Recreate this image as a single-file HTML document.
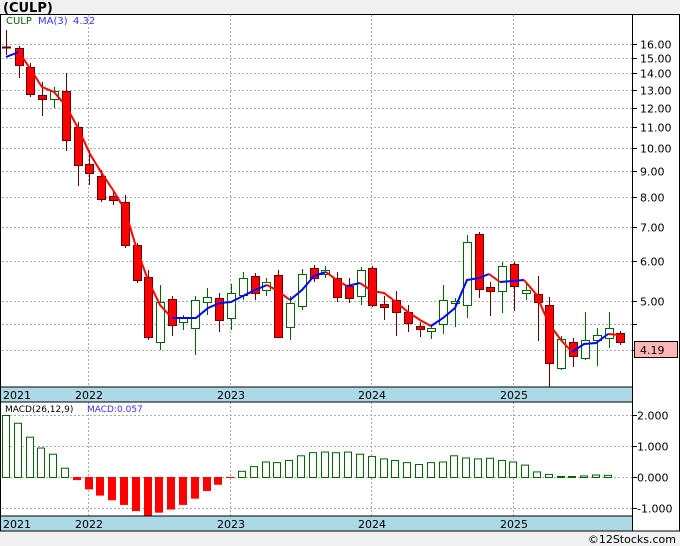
<!DOCTYPE html>
<html><head><meta charset="utf-8"><style>
html,body{margin:0;padding:0;background:#f0f0f0;width:680px;height:546px;overflow:hidden;font-family:"DejaVu Sans","Liberation Sans",sans-serif}
svg{position:absolute;left:0;top:0}
</style></head><body>
<svg id="s" width="680" height="546" xmlns="http://www.w3.org/2000/svg" font-family="DejaVu Sans, Liberation Sans, sans-serif">
<rect x="0" y="0" width="680" height="546" fill="#f0f0f0"/>
<text x="3" y="12" font-size="13" font-weight="bold" fill="#000">(CULP)</text>
<rect x="0" y="14" width="680" height="517" fill="#fff"/>
<rect x="0" y="387" width="632" height="15" fill="#add8e6"/>
<rect x="0" y="516" width="632" height="15" fill="#add8e6"/>
<g id="g"></g>
<line x1="0" y1="14.5" x2="680" y2="14.5" stroke="#000"/>
<line x1="0" y1="387" x2="632" y2="387" stroke="#000"/>
<line x1="0" y1="402" x2="632" y2="402" stroke="#000"/>
<line x1="0" y1="516" x2="632" y2="516" stroke="#000"/>
<line x1="0" y1="531" x2="680" y2="531" stroke="#000"/>
<line x1="632.5" y1="14" x2="632.5" y2="531" stroke="#000"/>
<line x1="0.5" y1="14" x2="0.5" y2="531" stroke="#000"/>
<line x1="679.5" y1="14" x2="679.5" y2="531" stroke="#000"/>
<text x="6" y="24" font-size="10" fill="#006400">CULP</text>
<text x="38" y="24" font-size="10" fill="#3333ff">MA(3)</text>
<text x="73" y="24" font-size="10" fill="#3333ff">4.32</text>
<text x="5" y="412" font-size="9" fill="#000">MACD(26,12,9)</text>
<text x="87" y="412" font-size="9" fill="#3333ff">MACD:0.057</text>
<g font-size="11" fill="#000">
<text x="3" y="399">2021</text><text x="75" y="399">2022</text><text x="217" y="399">2023</text><text x="358" y="399">2024</text><text x="500" y="399">2025</text>
<text x="3" y="528">2021</text><text x="75" y="528">2022</text><text x="217" y="528">2023</text><text x="358" y="528">2024</text><text x="500" y="528">2025</text>
</g>
<rect x="634.5" y="341.5" width="43" height="16" fill="#ffb6b6" stroke="#000"/>
<text x="640" y="354" font-size="11" fill="#000">4.19</text>
<text x="676" y="543" font-size="11" fill="#000" text-anchor="end">©12Stocks.com</text>
</svg>
<script>
var g=document.getElementById('g'),h='';
function L(x1,y1,x2,y2,c,w,d){h+='<line x1="'+x1+'" y1="'+y1+'" x2="'+x2+'" y2="'+y2+'" stroke="'+c+'" stroke-width="'+(w||1)+'"'+(d?' stroke-dasharray="'+d+'"':'')+'/>';}
function T(x,y,t){h+='<text x="'+x+'" y="'+y+'" font-size="11" fill="#000">'+t+'</text>';}
function Y(p){return 301-221*Math.log(p/5);}
[16,15,14,13,12,11,10,9,8,7,6,5].forEach(function(p){var y=Math.round(Y(p))+.5;L(2,y,632,y,'#aaa',1,'2,2');L(632,y,637,y,'#000');T(640,y+4,p.toFixed(2));});
[4.5,4].forEach(function(p){var y=Math.round(Y(p))+.5;L(2,y,632,y,'#aaa',1,'2,2');L(632,y,637,y,'#000');});
[[2,14],[2.5,10],[3,6]].forEach(function(a){});
[88,230,371,513].forEach(function(x){L(x+.5,15,x+.5,387,'#aaa',1,'2,2');L(x+.5,402,x+.5,516,'#aaa',1,'2,2');});
[[2,'2.000'],[1,'1.000'],[0,'0.000'],[-1,'-1.000']].forEach(function(a){var y=Math.round(477-31*a[0])+.5;L(2,y,632,y,'#aaa',1,'2,2');L(632,y,637,y,'#000');T(637,y+4,a[1]);});
var C=[[6,47,47,30,55,'d'],[19,48,65,46,78,'r'],[30,67,94,63,97,'r'],[42,95,99,82,116,'r'],[54,91,99,87,108,'g'],[66,91,140,73,151,'r'],[78,127,165,122,186,'r'],[89,164,173,150,185,'r'],[101,176,199,170,202,'r'],[113,196,200,192,205,'r'],[125,202,245,195,248,'r'],[137,245,280,243,283,'r'],
[148,277,337,270,340,'r'],[160,302,342,285,350,'g'],[172,299,325,296,336,'r'],[183,318,322,315,330,'g'],[195,300,328,296,355,'g'],[207,297,302,288,315,'g'],[219,298,320,293,332,'r'],[231,293,318,284,330,'g'],[243,278,295,272,300,'g'],[255,276,293,273,300,'r'],[266,282,290,278,296,'g'],[278,275,337,270,338,'r'],[290,303,327,296,340,'g'],[302,274,306,269,310,'g'],[314,268,278,265,282,'r'],[325,270,274,266,278,'g'],[337,278,297,272,302,'r'],[349,286,298,278,303,'r'],[361,270,296,267,305,'g'],[372,268,305,266,307,'r'],[384,304,307,296,320,'r'],[396,300,312,291,336,'r'],[408,312,323,305,332,'r'],[420,326,329,322,337,'r'],[431,328,331,325,339,'g'],[443,300,324,285,334,'g'],[455,301,302,298,327,'g'],[467,242,305,235,318,'g'],[479,234,289,232,298,'r'],[490,287,291,282,316,'r'],[502,266,291,262,313,'g'],[514,264,286,262,311,'r'],[526,290,293,282,300,'g'],[538,294,302,276,341,'r'],[549,305,363,297,387,'r'],[561,339,368,336,370,'g'],[573,342,356,338,367,'r'],[585,340,358,312,360,'g'],[597,335,340,328,366,'g'],[609,328,338,312,348,'g'],[620,333,342,331,345,'r']];
C.forEach(function(c){var x=c[0],col=c[5]=='g'?'#006400':'#600';L(x+.5,c[3],x+.5,c[4],col);
if(c[5]=='d'){L(x-4,c[1]+.5,x+5,c[1]+.5,'#600',2);return;}
h+='<rect x="'+(x-3.5)+'" y="'+(c[1]+.5)+'" width="8" height="'+Math.max(2,c[2]-c[1])+'" fill="'+(c[5]=='g'?'#fff':'#f00')+'" stroke="'+col+'"/>';});
function PL(pts,c){h+='<polyline points="'+pts+'" fill="none" stroke="'+c+'" stroke-width="2"/>';}
PL('6,57 19,52','#00f');
PL('19,52 31,70 42,87 54,92 66,106 78,128 90,154 101,172 113,190 125,210 137,250 148,280 160,305 172,318','#f00');
PL('172,318 184,318 196,318 208,308 220,303 231,302 243,296 255,290 267,285','#00f');
PL('267,285 278,291 290,300','#f00');
PL('290,300 302,290 314,276 326,272','#00f');
PL('326,272 338,281 347,286','#f00');
PL('347,286 360,283','#00f');
PL('360,283 372,291 384,293 396,302 408,312 420,320 431,326','#f00');
PL('431,326 443,318 455,308 467,280 479,278 489,274','#00f');
PL('489,274 500,282','#f00');
PL('500,282 524,280','#00f');
PL('524,280 536,294 549,324 561,340 572,352','#f00');
PL('572,352 584,344 596,343 608,334','#00f');
PL('608,334 620,335','#f00');
var M=[2,1.75,1.3,0.95,0.75,0.3,-0.1,-0.4,-0.6,-0.75,-0.9,-1.1,-1.25,-1.15,-1.05,-0.9,-0.7,-0.45,-0.25,-0.02,0.2,0.35,0.5,0.48,0.55,0.7,0.8,0.82,0.8,0.82,0.75,0.68,0.6,0.55,0.48,0.42,0.48,0.5,0.7,0.63,0.6,0.62,0.55,0.5,0.4,0.18,0.1,0.02,0.01,0.05,0.08,0.07];
M.forEach(function(v,i){var x=Math.round(6+11.8*i)-3.5,y0=477;var hh=Math.max(1,Math.abs(v)*31);
if(v>=0)h+='<rect x="'+x+'" y="'+(y0-hh+.5)+'" width="7" height="'+hh+'" fill="#fff" stroke="#006400"/>';
else h+='<rect x="'+(x-.5)+'" y="'+y0+'" width="8" height="'+hh+'" fill="#f00"/>';});
g.innerHTML=h;
</script>
</body></html>
